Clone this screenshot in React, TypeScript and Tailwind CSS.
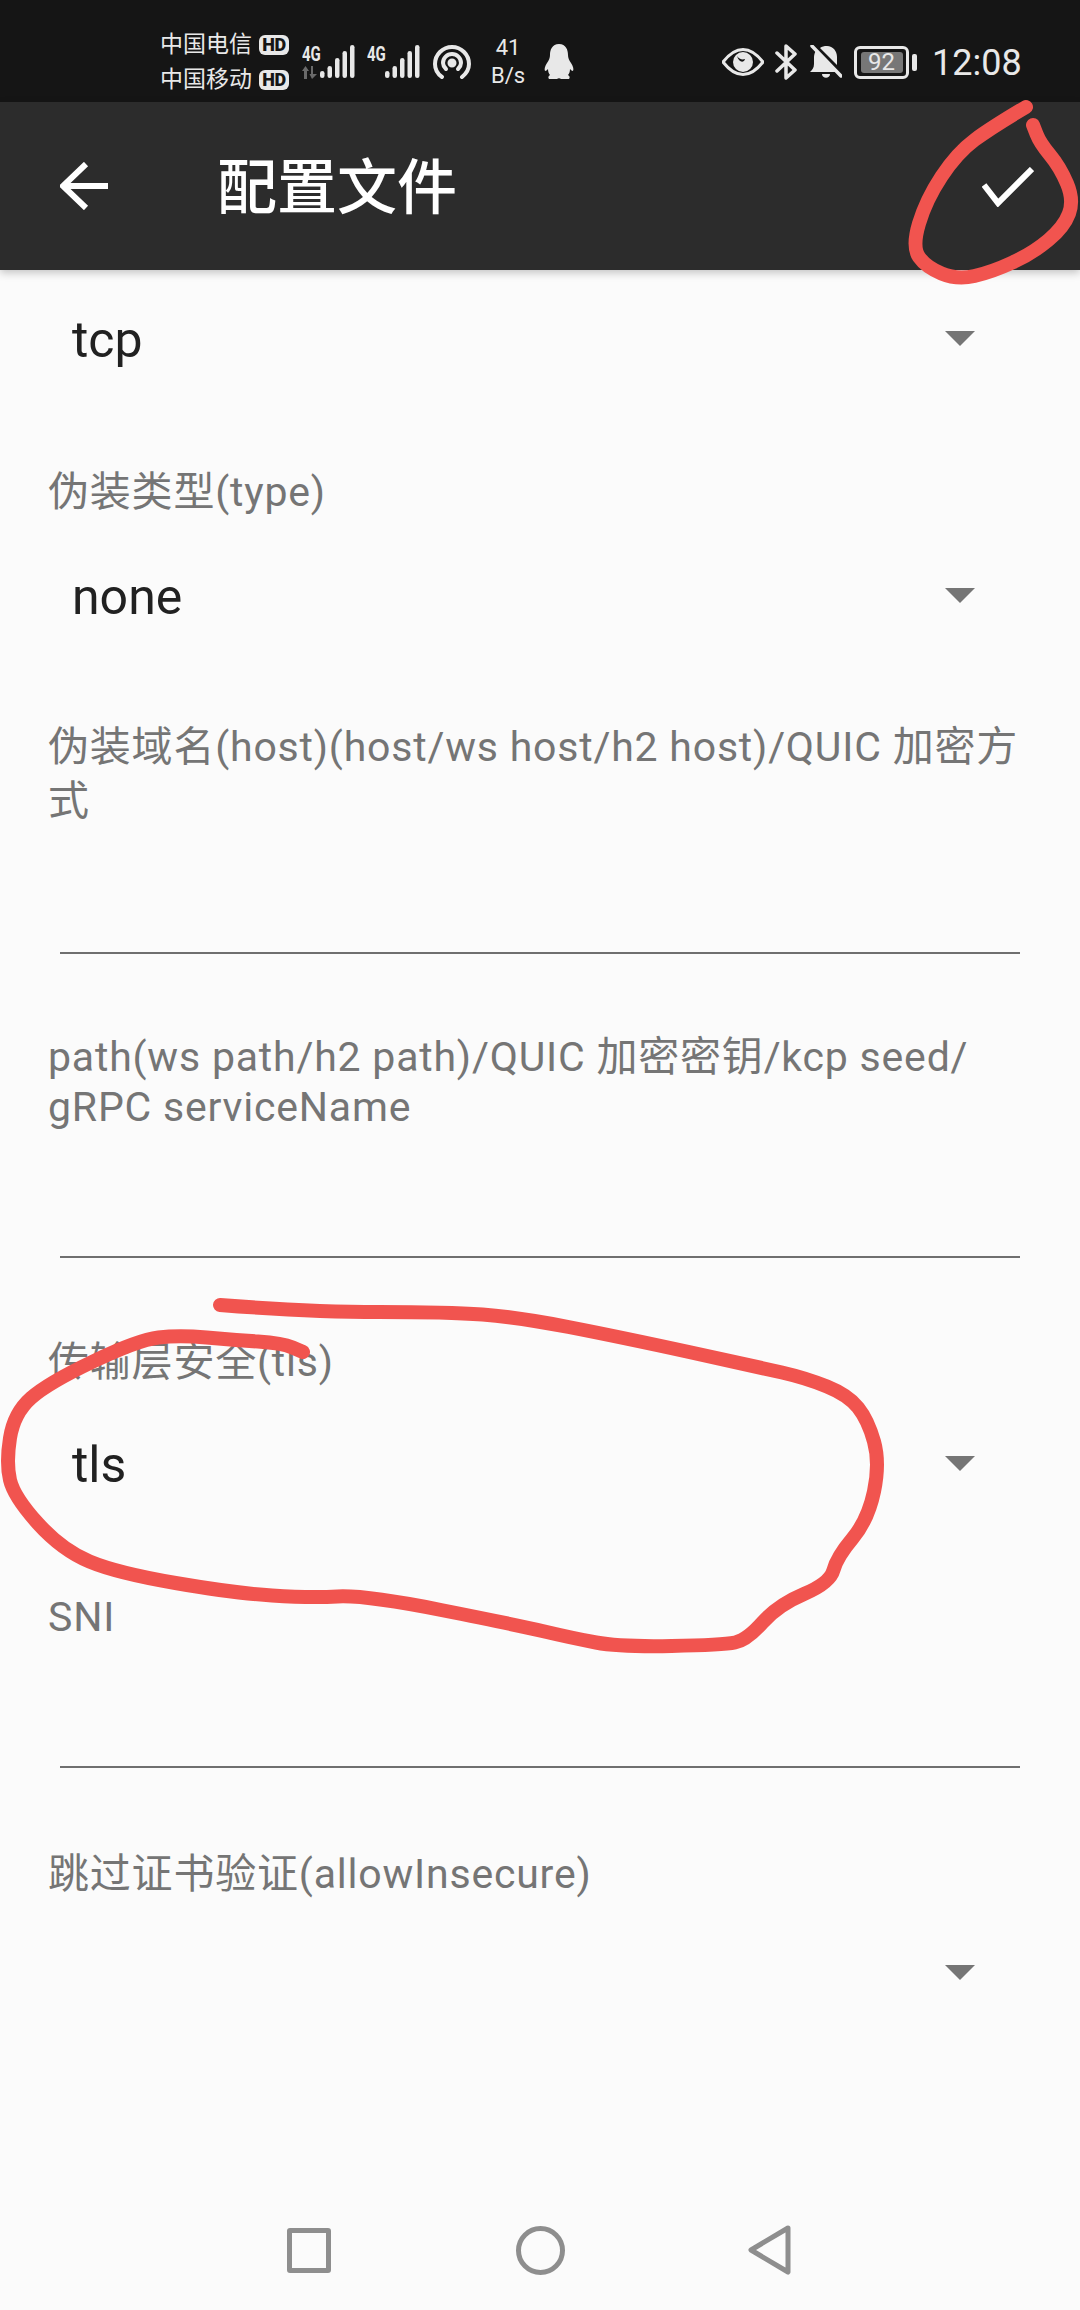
import React from "react";

const FONT = "font-['Roboto','Noto_Sans_CJK_SC',sans-serif]";

function smooth(p: number[][]) {
  let d = `M${p[0][0]} ${p[0][1]}`;
  for (let i = 1; i < p.length - 1; i++) {
    const mx = (p[i][0] + p[i + 1][0]) / 2;
    const my = (p[i][1] + p[i + 1][1]) / 2;
    d += ` Q${p[i][0]} ${p[i][1]} ${mx} ${my}`;
  }
  const l = p[p.length - 1];
  return d + ` L${l[0]} ${l[1]}`;
}

const big = [
  [220,1305],[310,1312],[448,1312],[517,1317],[620,1337],[758,1367],[806,1378],[848,1395],[868,1420],[880,1463],[868,1520],[837,1557],[830,1583],[778,1605],[747,1640],[723,1645],[620,1647],[572,1638],[517,1625],[365,1595],[310,1598],[234,1593],[117,1573],[62,1550],[14,1497],[6,1463],[14,1413],[48,1383],[138,1340],[179,1335],[234,1340],[282,1343],[303,1352],
];
const top = [
  [1026,107],[992,127],[957,153],[926,200],[912,247],[926,267],[957,280],[992,272],[1033,253],[1064,227],[1074,200],[1060,167],[1040,143],[1033,125],
];

function Arrow({ className = "" }: { className?: string }) {
  return (
    <svg width="30" height="15" viewBox="0 0 30 15" className={`shrink-0 ${className}`}>
      <path d="M0 0H30L15 15Z" fill="#757575" />
    </svg>
  );
}

function Spinner({ value, className }: { value?: string; className: string }) {
  return (
    <div className={`flex items-center justify-between pl-[72px] pr-[105px] ${className}`}>
      <span className="text-[50px] leading-none text-[#212121]">{value}</span>
      <Arrow className="mb-[3px]" />
    </div>
  );
}

function Label({ lines, lh, className }: { lines: string[]; lh: string; className: string }) {
  return (
    <div className={`pl-[48px] text-[41px] tracking-[0.8px] text-[#757575] whitespace-nowrap ${lh} ${className}`}>
      {lines.map((l) => (
        <div key={l}>{l}</div>
      ))}
    </div>
  );
}

function Input({ className }: { className: string }) {
  return <div className={`mx-[60px] border-b-2 border-[#6f6f6f] ${className}`} />;
}

function Signal() {
  return (
    <svg width="35" height="34" viewBox="0 0 35 34" fill="#e8e8e8">
      <rect x="0" y="26" width="4.500" height="7" rx="2.250" />
      <rect x="7.500" y="21" width="4.500" height="12" rx="2.250" />
      <rect x="15" y="13" width="4.500" height="20" rx="2.250" />
      <rect x="22.500" y="6" width="4.500" height="27" rx="2.250" />
      <rect x="30" y="0" width="4.500" height="33" rx="2.250" />
    </svg>
  );
}

function HD() {
  return (
    <span className="ml-[7px] flex h-[20px] w-[30px] items-center justify-center rounded-[6px] bg-[#e8e8e8] text-[18px] font-black leading-none tracking-[-0.5px] text-[#151515]">
      HD
    </span>
  );
}

function FourG({ className }: { className: string }) {
  return (
    <span className={`absolute top-[0px] origin-left scale-x-[0.75] text-[20px] font-bold leading-[18px] ${className}`}>4G</span>
  );
}

function StatusBar() {
  return (
    <div className="flex h-[102px] shrink-0 items-center bg-[#151515] pl-[160px] text-[#e8e8e8]">
      <div className="mt-[17px] flex w-[142px] flex-col gap-[9px] pt-[6px] text-[23px] leading-[26px]">
        <div className="flex items-center">中国电信<HD /></div>
        <div className="flex items-center">中国移动<HD /></div>
      </div>
      <div className="relative mt-[22px] flex w-[55px] justify-end pr-[2px]">
        <FourG className="left-0" />
        <svg width="16" height="13" viewBox="0 0 16 13" className="absolute left-0 top-[21px]" fill="#6a6a6a">
          <path d="M0 5L3.500 0L7 5H5V13H2V5ZM9 0H11V8H15L10 13L7.500 8H9Z" />
        </svg>
        <Signal />
      </div>
      <div className="relative ml-[8px] mt-[22px] flex w-[55px] justify-end">
        <FourG className="left-[2px]" />
        <Signal />
      </div>
      <svg width="38" height="34" viewBox="0 0 38 34" fill="none" stroke="#e8e8e8" strokeWidth="4" strokeLinecap="round" className="ml-[13px] mt-[22px]">
        <path d="M9 32C3 28 2 22 2 19A17 17 0 0 1 36 19C36 23 34 28 29 32" />
        <path d="M13 24C11 22 10 20 10 18A9 9 0 0 1 28 18C28 20 27 22 25 24" />
        <circle cx="19" cy="18" r="2.500" fill="#e8e8e8" />
      </svg>
      <div className="ml-[18px] mt-[22px] flex w-[38px] flex-col items-center text-[22px] leading-[28px]">
        <span>41</span>
        <span>B/s</span>
      </div>
      <svg width="30" height="36" viewBox="0 0 30 36" fill="#e8e8e8" className="ml-[17px] mt-[22px]">
        <path d="M15 0C22 0 24 6 24 11C24 14 25 16 27 19C29 22 30 25 29 27C28 27 27 26 26 25C26 28 25 30 24 31C26 32 26 34 25 35H17C16 34 14 34 13 35H5C4 34 4 32 6 31C5 30 4 28 4 25C3 26 2 27 1 27C0 25 1 22 3 19C5 16 6 14 6 11C6 6 8 0 15 0Z" />
      </svg>
      <svg width="42" height="28" viewBox="0 0 42 28" className="ml-[148px] mt-[22px]">
        <path d="M1 14C8 5 14 1.500 21 1.500S34 5 41 14C34 23 28 26.500 21 26.500S8 23 1 14Z" fill="none" stroke="#e8e8e8" strokeWidth="3" />
        <circle cx="21" cy="14" r="10" fill="#e8e8e8" />
        <path d="M15 8C17 11 20 12 23 11C22 15 17 15 15 8Z" fill="#151515" />
      </svg>
      <svg width="22" height="36" viewBox="0 0 22 36" fill="none" stroke="#e8e8e8" strokeWidth="3.500" strokeLinejoin="round" strokeLinecap="round" className="ml-[11px] mt-[22px]">
        <path d="M2 9L20 26L11 34V2L20 10L2 27" />
      </svg>
      <svg width="32" height="35" viewBox="0 0 32 35" className="ml-[13px] mt-[22px]">
        <path d="M6 5L27 27H0C2 25 4 23 4 19V12C4 10 5 7 6 5ZM10 3C12 1.500 14 1 17 1C23 1 27 6 27 12V20Z" fill="#e8e8e8" />
        <path d="M12 29H20C20 34 12 34 12 29Z" fill="#e8e8e8" />
        <path d="M2 1L31 31" stroke="#e8e8e8" strokeWidth="3.500" strokeLinecap="round" />
      </svg>
      <div className="relative ml-[12px] mt-[22px] flex h-[33px] w-[55px] items-center justify-center rounded-[6px] border-[3px] border-[#e8e8e8]">
        <span className="flex h-[21px] w-[42px] items-center justify-center rounded-[3px] bg-[#777777] text-[24px] leading-none">92</span>
        <span className="absolute right-[-11px] top-[5px] h-[17px] w-[5px] rounded-[2px] bg-[#e8e8e8]" />
      </div>
      <span className="ml-[23px] mt-[24px] text-[36px] leading-none">12:08</span>
    </div>
  );
}

function AppBar() {
  return (
    <div className="relative z-10 flex h-[168px] shrink-0 items-center bg-[#2c2c2c] shadow-[0_3px_8px_rgba(0,0,0,0.22)]">
      <svg width="50" height="48" viewBox="0 0 50 48" fill="none" stroke="#ffffff" strokeWidth="6" className="ml-[60px]">
        <path d="M48 24H4M26 2L3 24L26 46" />
      </svg>
      <span className="ml-[107px] mt-[5px] text-[60px] font-medium leading-none text-white">配置文件</span>
      <svg width="52" height="40" viewBox="0 0 52 40" fill="none" stroke="#ffffff" strokeWidth="6" className="ml-auto mr-[46px] mt-[2px]">
        <path d="M2 18L16 36L50 2" />
      </svg>
    </div>
  );
}

function NavBar() {
  return (
    <div className="mt-auto mb-[35px] flex shrink-0 items-center pl-[287px]">
      <div className="h-[45px] w-[44px] rounded-[3px] border-[5px] border-[#8e8e8e]" />
      <div className="ml-[185px] h-[49px] w-[49px] rounded-full border-[5px] border-[#8e8e8e]" />
      <svg width="44" height="50" viewBox="0 0 44 50" fill="none" stroke="#8e8e8e" strokeWidth="5" strokeLinejoin="round" className="ml-[183px]">
        <path d="M40 3L3 25L40 47Z" />
      </svg>
    </div>
  );
}

export default function App() {
  return (
    <div className={`relative flex h-[2310px] w-[1080px] flex-col overflow-hidden bg-[#fbfbfb] ${FONT}`}>
      <StatusBar />
      <AppBar />
      <Spinner value="tcp" className="h-[140px]" />
      <Label lines={["伪装类型(type)"]} lh="leading-[60px]" className="mt-[52px]" />
      <Spinner value="none" className="mt-[10px] h-[130px]" />
      <Label lines={["伪装域名(host)(host/ws host/h2 host)/QUIC 加密方", "式"]} lh="leading-[54px]" className="mt-[58px]" />
      <Input className="h-[126px]" />
      <Label lines={["path(ws path/h2 path)/QUIC 加密密钥/kcp seed/", "gRPC serviceName"]} lh="leading-[50px]" className="mt-[78px]" />
      <Input className="h-[126px]" />
      <Label lines={["传输层安全(tls)"]} lh="leading-[60px]" className="mt-[74px]" />
      <Spinner value="tls" className="mt-[8px] h-[130px]" />
      <Label lines={["SNI"]} lh="leading-[60px]" className="mt-[57px]" />
      <Input className="h-[121px]" />
      <Label lines={["跳过证书验证(allowInsecure)"]} lh="leading-[60px]" className="mt-[76px]" />
      <Spinner className="mt-[5px] h-[130px]" />
      <NavBar />
      <svg className="pointer-events-none absolute left-0 top-0 z-20" width="1080" height="2310" viewBox="0 0 1080 2310" fill="none" stroke="#f1544f" strokeWidth="14" strokeLinecap="round" strokeLinejoin="round">
        <path d={smooth(big)} />
        <path d={smooth(top)} />
      </svg>
    </div>
  );
}
